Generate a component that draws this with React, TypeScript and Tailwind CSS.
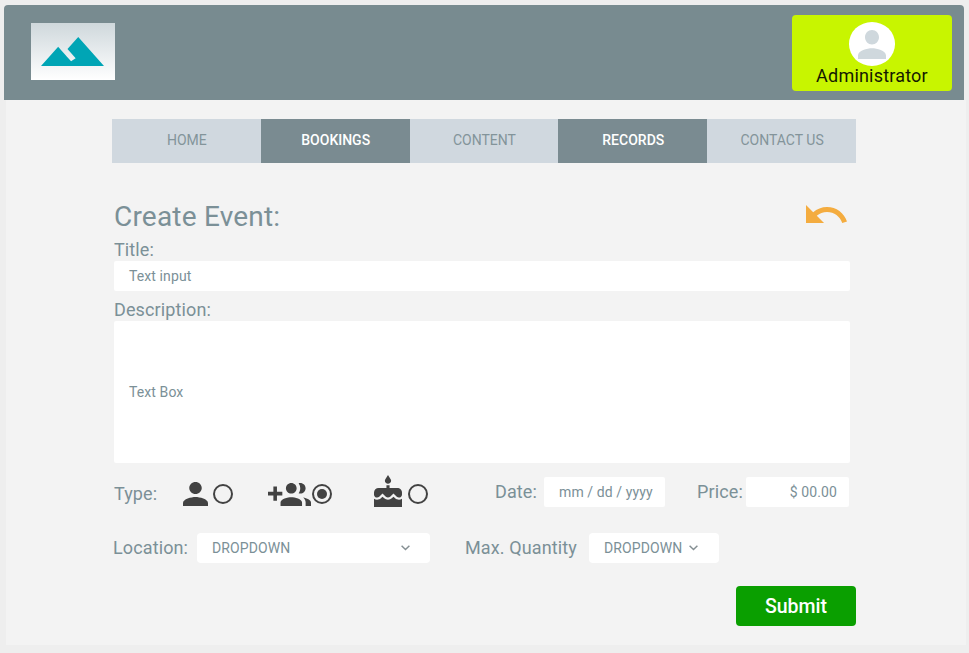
import type { ReactNode } from "react";

const PERSON =
  "M12 12c2.21 0 4-1.79 4-4s-1.79-4-4-4-4 1.79-4 4 1.79 4 4 4zm0 2c-2.67 0-8 1.34-8 4v2h16v-2c0-2.66-5.33-4-8-4z";
const GROUP_ADD =
  "M8 10H5V7H3v3H0v2h3v3h2v-3h3v-2zm10 1c1.66 0 2.99-1.34 2.99-3S19.66 5 18 5c-.32 0-.63.05-.91.14.57.81.9 1.79.9 2.86s-.34 2.04-.9 2.86c.28.09.59.14.91.14zm-5 0c1.66 0 2.99-1.34 2.99-3S14.66 5 13 5c-1.66 0-3 1.34-3 3s1.34 3 3 3zm6.62 2.16c.83.73 1.38 1.66 1.38 2.84v2h3v-2c0-1.54-2.37-2.49-4.38-2.84zM13 13c-2 0-6 1-6 3v2h12v-2c0-2-4-3-6-3z";
const CAKE =
  "M12 6c1.11 0 2-.9 2-2 0-.38-.1-.73-.29-1.03L12 0l-1.71 2.97c-.19.3-.29.65-.29 1.03 0 1.1.9 2 2 2zm4.6 9.99l-1.07-1.07-1.08 1.07c-1.3 1.3-3.58 1.31-4.89 0l-1.07-1.07-1.09 1.07C6.75 16.64 5.88 17 4.96 17c-.73 0-1.4-.23-1.96-.61V22h18v-5.61c-.56.38-1.23.61-1.96.61-.92 0-1.79-.36-2.44-1.01zM18 9h-5V7h-2v2H6c-1.66 0-3 1.34-3 3v1.54c0 1.08.88 1.96 1.96 1.96.52 0 1.02-.2 1.38-.57l2.14-2.13 2.13 2.13c.74.74 2.03.74 2.77 0l2.14-2.13 2.13 2.13c.37.37.86.57 1.38.57 1.08 0 1.96-.88 1.96-1.96V12C21 10.34 19.66 9 18 9z";
const UNDO =
  "M12.5 8c-2.65 0-5.05.99-6.9 2.6L2 7v9h9l-3.62-3.62c1.39-1.16 3.16-1.88 5.12-1.88 3.54 0 6.55 2.31 7.6 5.5l2.37-.78C21.08 11.03 17.15 8 12.5 8z";
const MOUNTAINS = "M14 6l-3.75 5 2.85 3.8-1.6 1.2C9.81 13.75 7 10 7 10l-6 8h22L14 6z";

function Icon({ d, box, className }: { d: string; box: string; className: string }) {
  return (
    <svg viewBox={box} preserveAspectRatio="none" fill="currentColor" className={`shrink-0 ${className}`}>
      <path d={d} />
    </svg>
  );
}

function Label({ children, className = "" }: { children: ReactNode; className?: string }) {
  return (
    <span className={`block shrink-0 whitespace-nowrap text-[18px] leading-[22px] tracking-[0.12px] ${className}`}>
      {children}
    </span>
  );
}

function Radio({ checked = false, className = "" }: { checked?: boolean; className?: string }) {
  return (
    <span
      className={`flex size-5 shrink-0 items-center justify-center rounded-full border-2 border-[#424242] ${className}`}
    >
      {checked && <span className="size-[10px] rounded-full bg-[#424242]" />}
    </span>
  );
}

function Chevron({ className = "" }: { className?: string }) {
  return (
    <svg viewBox="0 0 9 6" fill="none" stroke="#858f93" strokeWidth="1.5" className={`h-[6px] w-[9px] shrink-0 ${className}`}>
      <path d="M.6 .8 4.5 4.5 8.4 .8" />
    </svg>
  );
}

const tabs = [
  { name: "HOME", active: false },
  { name: "BOOKINGS", active: true },
  { name: "CONTENT", active: false },
  { name: "RECORDS", active: true },
  { name: "CONTACT US", active: false },
];

export default function App() {
  return (
    <div className="h-[653px] w-[969px] overflow-hidden bg-[#eeeeee] pt-[5px] font-['Roboto',sans-serif] text-[#7b9097]">
      <header className="ml-1 flex h-[95px] w-[960px] justify-between rounded-t-[4px] bg-[#788b90] pr-3 pl-[27px]">
        <div className="mt-[18px] flex h-[57px] w-[83.5px] justify-center bg-linear-to-b from-[#cfd8dc] to-white pt-[14px] text-[#00a5b5]">
          <Icon d={MOUNTAINS} box="1 6 22 12" className="h-[29px] w-[63px]" />
        </div>
        <div className="mt-[10px] flex h-[76px] w-40 flex-col items-center rounded-[4px] bg-[#c8f500] pt-[7px] text-[#141a00]">
          <div className="flex h-[43.5px] w-[46px] shrink-0 justify-center rounded-[50%] bg-white pt-[8px] text-[#cfd8dd]">
            <Icon d={PERSON} box="4 4 16 16" className="h-[29px] w-[28px]" />
          </div>
          <span className="-mt-[0.5px] text-[18px] leading-[22px] tracking-[0.2px]">Administrator</span>
        </div>
      </header>

      <main className="ml-[6px] h-[545px] w-[960px] bg-[#f3f3f3] pt-[19px] pl-[106px]">
        <nav className="grid h-11 w-[744px] grid-cols-5 text-[14px] leading-[42px]">
          {tabs.map((tab) => (
            <div
              key={tab.name}
              className={`pl-px text-center ${tab.active ? "bg-[#7a8b91] font-medium text-white" : "bg-[#d0d8df] text-[#83949a]"}`}
            >
              {tab.name}
            </div>
          ))}
        </nav>

        <div className="w-[738px] pl-[2px]">
          <div className="flex h-[76px] justify-between pt-[38px]">
            <h1 className="text-[28px] leading-[32px] tracking-[0.2px]">Create Event:</h1>
            <Icon d={UNDO} box="2 7 20.47 9" className="mt-[4px] mr-[3px] h-[18px] w-[41px] text-[#f4ac3f]" />
          </div>
          <Label>Title:</Label>
          <div className="h-[30px] rounded-[2px] bg-white pl-[15px] text-[14px] leading-[30px] tracking-[0.1px]">
            Text input
          </div>
          <Label className="mt-[8px]">Description:</Label>
          <div className="h-[142px] rounded-[2px] bg-white pl-[15px] text-[14px] leading-[142px] tracking-[0.1px]">
            Text Box
          </div>

          <div className="flex h-[62px] items-start text-[14px]">
            <Label className="mt-[20px] w-[69px]">Type:</Label>
            <Icon d={PERSON} box="4 4 16 16" className="mt-[19px] h-6 w-[25px] text-[#424242]" />
            <Radio className="mt-[21px] ml-[5px]" />
            <Icon d={GROUP_ADD} box="0 5 24 13" className="mt-[20px] ml-[35px] h-[23px] w-[43px] text-[#424242]" />
            <Radio checked className="mt-[21px] ml-[1px]" />
            <Icon d={CAKE} box="3 0 18 22" className="mt-[12px] ml-[41.5px] h-8 w-[28px] text-[#424242]" />
            <Radio className="mt-[21px] ml-[6px]" />
            <Label className="mt-[18px] ml-[67.5px] w-[49px]">Date:</Label>
            <div className="mt-[14px] h-[30px] w-[121px] rounded-[2px] bg-white pl-[15px] leading-[30px] tracking-[0.1px]">
              mm / dd / yyyy
            </div>
            <Label className="mt-[18px] ml-8 w-[49px]">Price:</Label>
            <div className="mt-[14px] h-[30px] w-[103px] rounded-[2px] bg-white pr-3 text-right leading-[30px] tracking-[0.1px]">
              $ 00.00
            </div>
          </div>

          <div className="mt-[8px] -ml-px flex h-[30px] items-center text-[14px]">
            <Label className="w-[84px]">Location:</Label>
            <div className="flex h-[30px] w-[233px] items-center justify-between rounded-[4px] bg-white pr-[20px] pl-[15px]">
              <span className="tracking-[0.1px]">DROPDOWN</span>
              <Chevron />
            </div>
            <Label className="ml-[35px] w-[124px]">Max. Quantity</Label>
            <div className="flex h-[30px] w-[130px] items-center rounded-[4px] bg-white pl-[15px]">
              <span className="tracking-[0.1px]">DROPDOWN</span>
              <Chevron className="ml-[7px]" />
            </div>
          </div>
        </div>

        <button className="mt-[23px] ml-[624px] block h-10 w-[120px] rounded-[4px] bg-[#0a9f00] pt-px text-[19.5px] leading-[39px] font-medium text-white">
          Submit
        </button>
      </main>
    </div>
  );
}
